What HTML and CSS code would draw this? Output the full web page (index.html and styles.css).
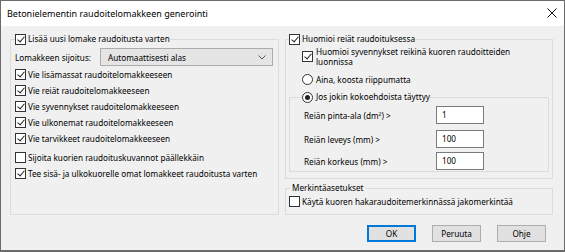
FILE: index.html
```html
<!DOCTYPE html>
<html lang="fi">
<head>
  <meta charset="UTF-8" />
  <title>Betonielementin raudoitelomakkeen generointi</title>
  <link rel="stylesheet" href="styles.css">
</head>
<body>
  <div class="ikkuna">
    <div class="otsikko">
      <span>Betonielementin raudoitelomakkeen generointi</span>
      <svg class="sulje" width="10" height="10" viewBox="0 0 10 10"><path d="M0.5 0.5 L9.5 9.5 M9.5 0.5 L0.5 9.5" stroke="#111" stroke-width="1"/></svg>
    </div>

    <div class="sisalto">
      <div class="sarakkeet">
        <fieldset class="ryhma vasen">
          <legend><label class="valinta"><span class="ruutu on"></span>Lisää uusi lomake raudoitusta varten</label></legend>

          <div class="sijoitus">
            <span>Lomakkeen sijoitus:</span>
            <div class="valikko">
              <span>Automaattisesti alas</span>
              <svg width="8" height="5" viewBox="0 0 8 5"><path d="M0.5 0.5 L4 4 L7.5 0.5" fill="none" stroke="#555" stroke-width="1"/></svg>
            </div>
          </div>

          <label class="valinta rivi"><span class="ruutu on"></span>Vie lisämassat raudoitelomakkeeseen</label>
          <label class="valinta rivi"><span class="ruutu on"></span>Vie reiät raudoitelomakkeeseen</label>
          <label class="valinta rivi"><span class="ruutu on"></span>Vie syvennykset raudoitelomakkeeseen</label>
          <label class="valinta rivi"><span class="ruutu on"></span>Vie ulkonemat raudoitelomakkeeseen</label>
          <label class="valinta rivi"><span class="ruutu on"></span>Vie tarvikkeet raudoitelomakkeeseen</label>
          <label class="valinta rivi erillinen"><span class="ruutu"></span>Sijoita kuorien raudoituskuvannot päällekkäin</label>
          <label class="valinta rivi"><span class="ruutu on"></span>Tee sisä- ja ulkokuorelle omat lomakkeet raudoitusta varten</label>
        </fieldset>

        <div class="oikea">
          <fieldset class="ryhma reiat">
            <legend><label class="valinta"><span class="ruutu on"></span>Huomioi reiät raudoituksessa</label></legend>

            <label class="valinta kaksirivi"><span class="ruutu on"></span><span>Huomioi syvennykset reikinä kuoren raudoitteiden<br>luonnissa</span></label>
            <label class="valinta rivi sisenna"><span class="nappi"></span>Aina, koosta riippumatta</label>

            <fieldset class="ryhma ehdot">
              <legend><label class="valinta"><span class="nappi on"></span>Jos jokin kokoehdoista täyttyy</label></legend>
              <div class="ehto"><span>Reiän pinta-ala (dm²) &gt;</span><span class="kentta">1</span></div>
              <div class="ehto"><span>Reiän leveys (mm) &gt;</span><span class="kentta">100</span></div>
              <div class="ehto"><span>Reiän korkeus (mm) &gt;</span><span class="kentta">100</span></div>
            </fieldset>
          </fieldset>

          <fieldset class="ryhma merkinta">
            <legend>Merkintäasetukset</legend>
            <label class="valinta"><span class="ruutu"></span>Käytä kuoren hakaraudoitemerkinnässä jakomerkintää</label>
          </fieldset>
        </div>
      </div>

      <div class="painikkeet">
        <button class="oletus">OK</button>
        <button>Peruuta</button>
        <button>Ohje</button>
      </div>
    </div>
  </div>
</body>
</html>
```

FILE: styles.css
```css
* { box-sizing: border-box; }

body {
  margin: 0;
  background: #fff;
  font-family: "Noto Sans", "Open Sans", sans-serif;
  font-size: 8.2px;
  color: #000;
}

.ikkuna {
  width: 565px;
  height: 252px;
  border: 1px solid #6b6b6b;
  border-bottom-width: 2px;
  display: flex;
  flex-direction: column;
}

.otsikko {
  height: 25px;
  background: #fff;
  display: flex;
  align-items: center;
  justify-content: space-between;
  padding: 0 7px 1px 6px;
  font-size: 9px;
}

.sisalto {
  flex: 1;
  background: #f0f0f0;
  padding: 7px 11px 0 9px;
}

.sarakkeet {
  display: flex;
  gap: 6px;
}

.ryhma {
  margin: 0;
  border: 1px solid #dcdcdc;
  min-width: 0;
}

.ryhma legend {
  padding: 0;
  line-height: 12px;
}

.valinta {
  display: flex;
  align-items: center;
  gap: 2px;
  white-space: nowrap;
}

.ruutu, .nappi {
  width: 11px;
  height: 11px;
  flex: none;
  border: 1px solid #333;
  background: #fff;
  position: relative;
}

.nappi { border-radius: 50%; }

.ruutu.on::after {
  content: "";
  position: absolute;
  left: 3px;
  top: 0px;
  width: 3px;
  height: 6px;
  border: solid #222;
  border-width: 0 1px 1px 0;
  transform: rotate(40deg);
}

.nappi.on::after {
  content: "";
  position: absolute;
  left: 2px;
  top: 2px;
  width: 5px;
  height: 5px;
  border-radius: 50%;
  background: #222;
}

/* vasen ryhmä */
.vasen {
  width: 269px;
  height: 182px;
  padding: 0 5px 0 4px;
}

.sijoitus {
  display: flex;
  align-items: center;
  justify-content: space-between;
  margin-top: 3px;
}

.valikko {
  width: 173px;
  height: 18px;
  background: #e5e5e5;
  border: 1px solid #acacac;
  display: flex;
  align-items: center;
  justify-content: space-between;
  padding: 0 6px 0 7px;
}

.rivi { height: 16px; }
.erillinen { margin-top: 3px; }

/* oikea sarake */
.oikea {
  width: 268px;
  display: flex;
  flex-direction: column;
  gap: 3px;
}

.reiat {
  height: 146px;
  padding: 0 3px 0 3px;
}

.kaksirivi {
  align-items: flex-start;
  line-height: 10px;
  margin: 2px 0 0 13px;
  gap: 3px;
  white-space: normal;
}

.kaksirivi .ruutu { margin-top: 4px; }

.sisenna { margin: 4px 0 0 13px; gap: 3px; }

.ehdot {
  margin-top: 4px;
  padding: 0 0 1px 12px;
}

.ehdot .valinta { gap: 3px; }

.ehto {
  display: flex;
  align-items: center;
  height: 18px;
  margin: 3px 0 0 2px;
}

.ehto + .ehto { margin-top: 6px; }
.ehto:last-child { margin-top: 4px; }

.ehto span:first-child { width: 132px; }

.kentta {
  width: 48px;
  height: 18px;
  background: #fff;
  border: 1px solid #7a7a7a;
  padding: 3px 0 0 5px;
  line-height: 10px;
}

.merkinta {
  height: 33px;
  padding: 0 3px 0 4px;
}

.merkinta legend {
  padding: 0 2px;
}

.merkinta .valinta { margin: 2px 0 0 -1px; }

/* painikkeet */
.painikkeet {
  display: flex;
  justify-content: flex-end;
  gap: 16px;
  margin-top: 10px;
  padding-right: 7px;
}

button {
  width: 49px;
  height: 17px;
  margin: 0;
  padding: 0;
  background: #e1e1e1;
  border: 1px solid #adadad;
  font: inherit;
  color: #000;
}

button.oletus {
  border-color: #0078d7;
  box-shadow: inset 0 0 0 1px #0078d7;
}
```
